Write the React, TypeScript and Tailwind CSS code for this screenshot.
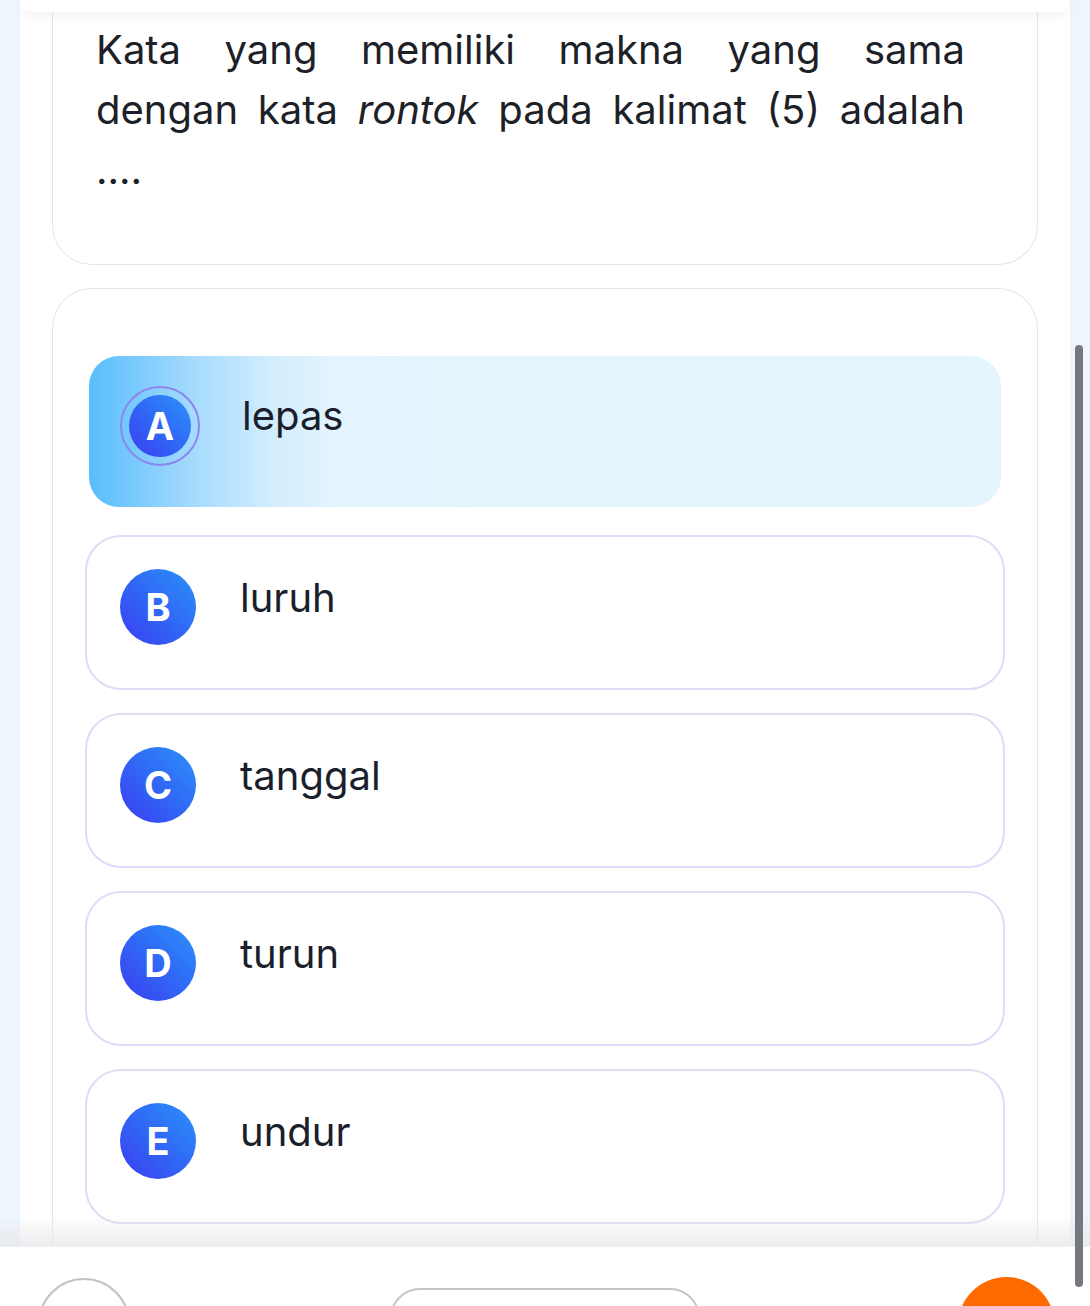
import React from "react";

type Option = { letter: string; text: string };

const OPTIONS: Option[] = [
  { letter: "B", text: "luruh" },
  { letter: "C", text: "tanggal" },
  { letter: "D", text: "turun" },
  { letter: "E", text: "undur" },
];

function LetterBadge({ letter, size }: { letter: string; size: string }) {
  return (
    <div
      className={`${size} flex shrink-0 items-center justify-center rounded-full bg-[linear-gradient(45deg,#3b3df0_0%,#2f6cf6_55%,#2c92f9_100%)] text-[38px] font-bold leading-none text-white`}
    >
      {letter}
    </div>
  );
}

export default function App() {
  return (
    <div className="relative h-[1306px] overflow-hidden bg-[#eef5fd] font-['Inter',sans-serif]">
      <div className="mx-[20px] h-full bg-white">
        {/* top bar */}
        <div className="relative z-10 h-[12px] rounded-b-[30px] bg-white shadow-[0_4px_12px_rgba(0,0,0,0.05)]" />

        <div className="px-[32px]">
          {/* question */}
          <div className="rounded-b-[40px] border border-t-0 border-[#e3e6ea] pb-[64px] pl-[43px] pr-[72px] pt-[8px]">
            <p className="text-[40px] leading-[60px] text-[#1d2127]">
              <span className="block text-justify [text-align-last:justify]">
                Kata yang memiliki makna yang sama
              </span>
              <span className="block text-justify [text-align-last:justify]">
                dengan kata <i>rontok</i> pada kalimat (5) adalah
              </span>
              <span className="block">....</span>
            </p>
          </div>

          {/* options */}
          <div className="mt-[23px] h-[1100px] rounded-t-[40px] border border-b-0 border-[#e3e6ea] px-[32px] pt-[67px]">
            <div className="mx-[4px] flex h-[151px] items-start gap-[42px] rounded-[30px] bg-[linear-gradient(90deg,#58bdfc_0%,#a8dcfe_12%,#d2edfe_20%,#e3f4fe_27%,#e5f5fe_100%)] pl-[31px] pt-[30px]">
              <div className="flex h-[80px] w-[80px] shrink-0 items-center justify-center rounded-full border-2 border-[#8d86ee]">
                <LetterBadge letter="A" size="h-[62px] w-[62px]" />
              </div>
              <span className="mt-[6px] text-[40px] leading-[48px] text-[#1a1f2b]">lepas</span>
            </div>

            <div className="mt-[28px] flex flex-col gap-[23px]">
              {OPTIONS.map((o) => (
                <div
                  key={o.letter}
                  className="flex h-[155px] items-start gap-[44px] rounded-[36px] border-2 border-[#dedcf6] bg-white pl-[33px] pt-[32px]"
                >
                  <LetterBadge letter={o.letter} size="h-[76px] w-[76px]" />
                  <span className="mt-[5px] text-[40px] leading-[48px] text-[#1a1f2b]">{o.text}</span>
                </div>
              ))}
            </div>
          </div>
        </div>
      </div>

      {/* fade above bottom nav */}
      <div className="absolute left-0 right-0 top-[1216px] h-[30px] bg-gradient-to-b from-white/0 to-[#e7e8ea]/80" />

      {/* bottom nav */}
      <div className="absolute bottom-0 left-0 right-0 h-[60px] overflow-hidden border-t border-[#eceef0] bg-white">
        <div className="absolute left-[38px] top-[31px] h-[92px] w-[92px] rounded-full border-2 border-[#c4c4c4]" />
        <div className="absolute left-[390px] top-[41px] h-[60px] w-[310px] rounded-[30px] border-2 border-[#c4c4c4]" />
        <div className="absolute left-[958px] top-[30px] h-[97px] w-[97px] rounded-full bg-[#ff6a00]" />
      </div>

      {/* scrollbar */}
      <div className="absolute left-[1075px] top-[345px] h-[942px] w-[8px] rounded-full bg-[#75797d]" />
    </div>
  );
}
